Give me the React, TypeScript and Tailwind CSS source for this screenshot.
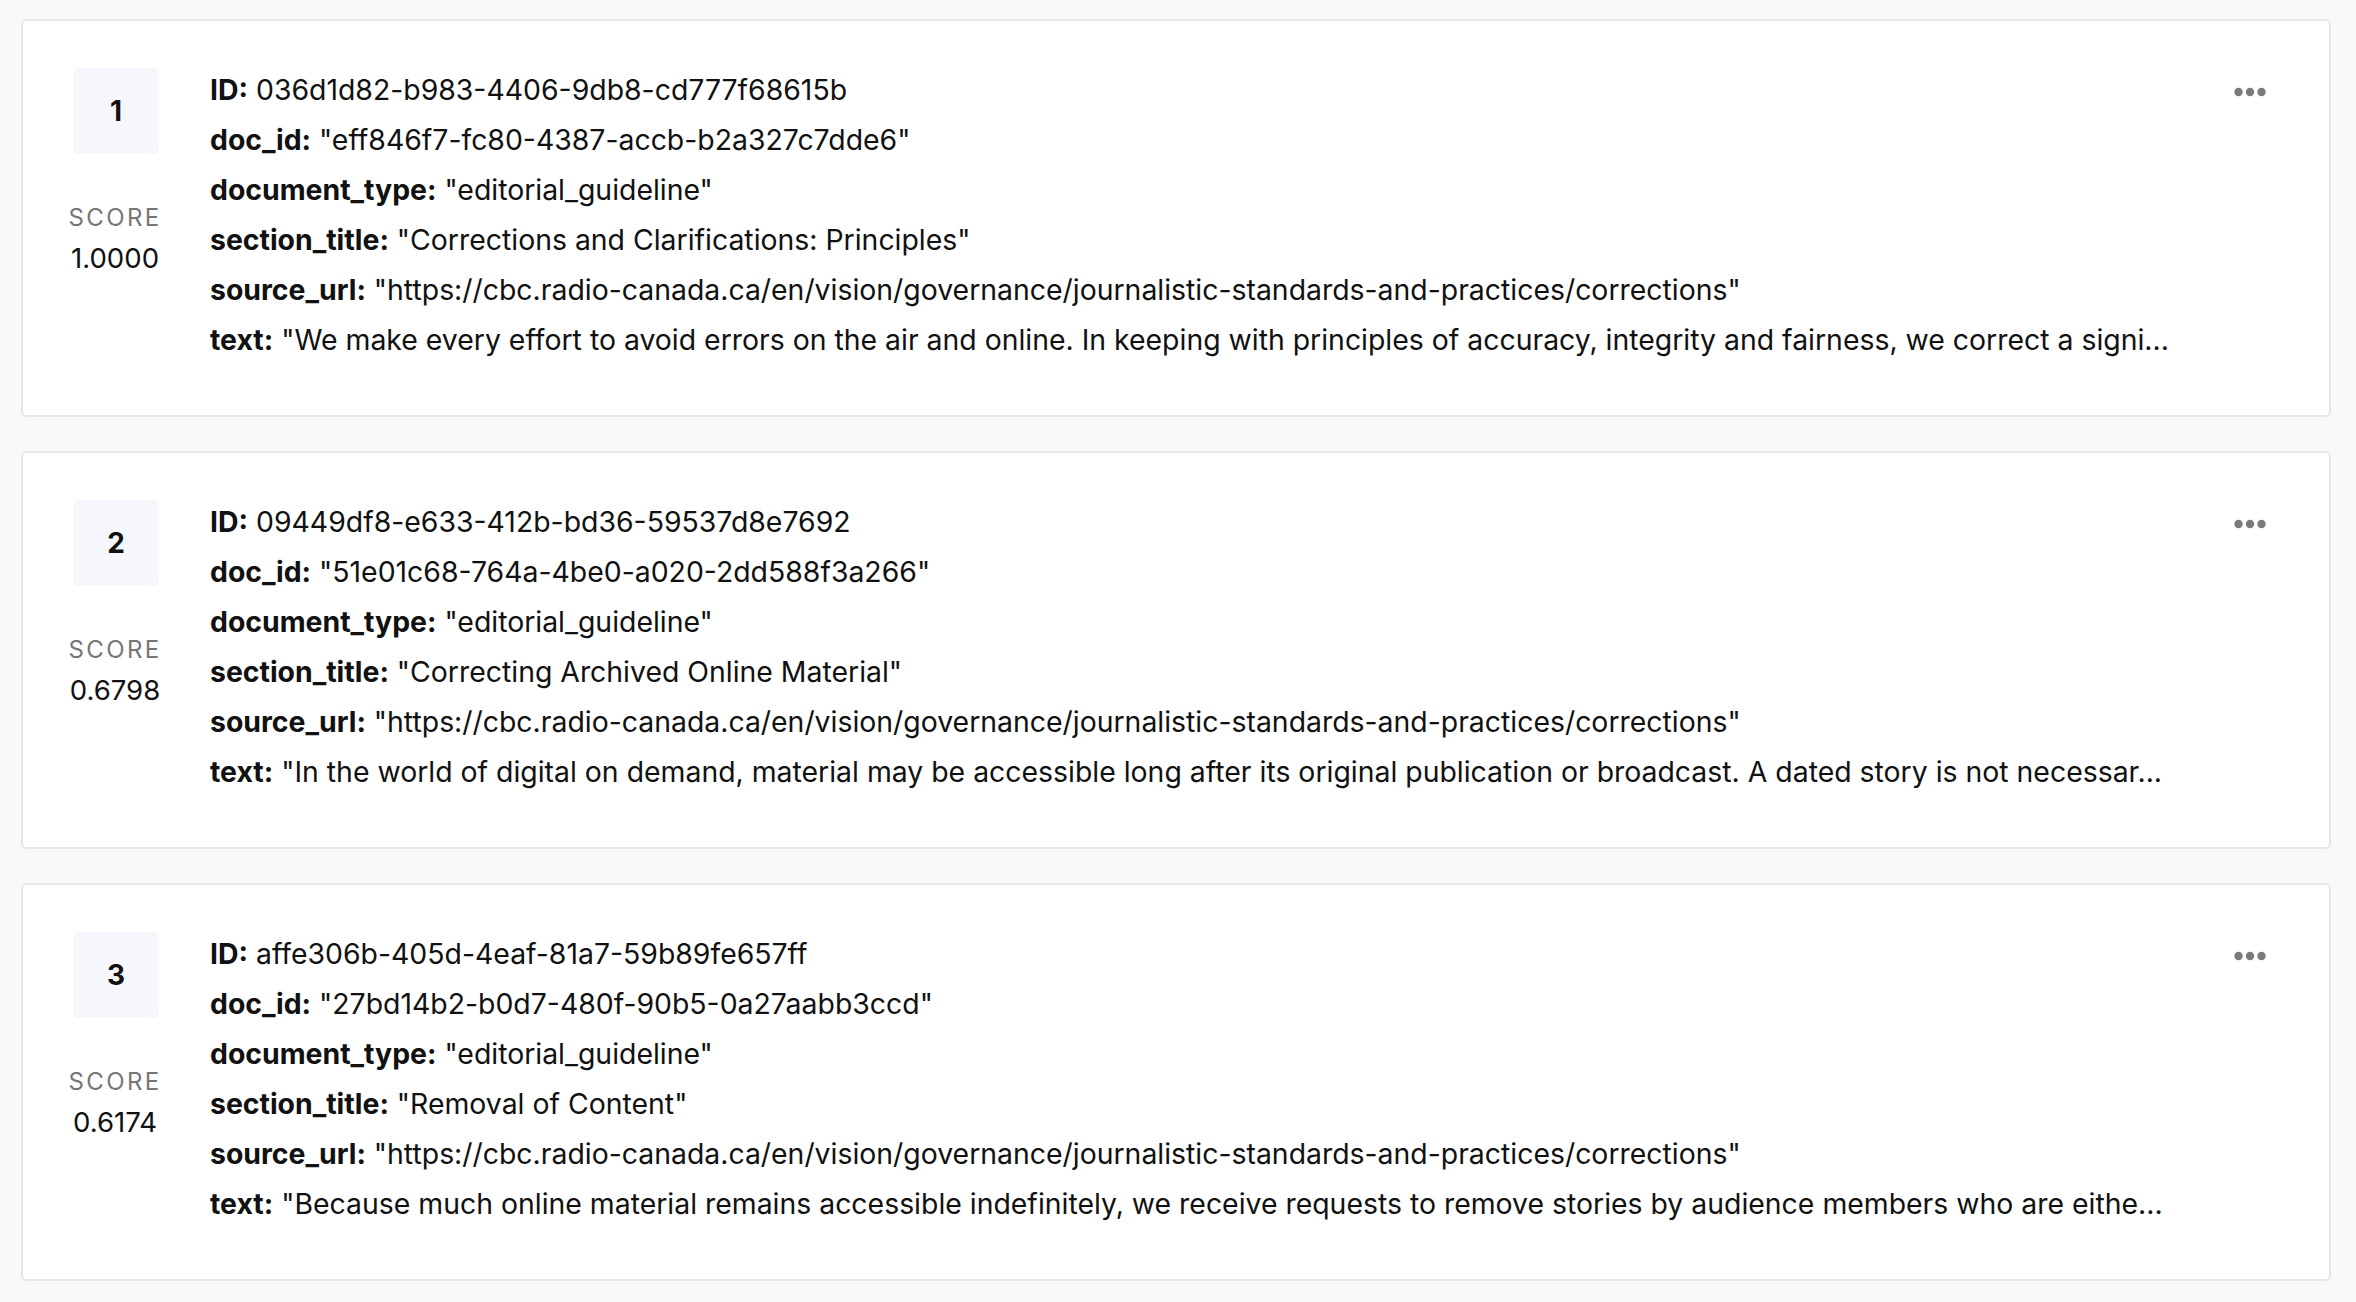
const results = [
  {
    rank: 1,
    score: "1.0000",
    id: "036d1d82-b983-4406-9db8-cd777f68615b",
    docId: "eff846f7-fc80-4387-accb-b2a327c7dde6",
    sectionTitle: "Corrections and Clarifications: Principles",
    text: "We make every effort to avoid errors on the air and online. In keeping with principles of accuracy, integrity and fairness, we correct a signi...",
  },
  {
    rank: 2,
    score: "0.6798",
    id: "09449df8-e633-412b-bd36-59537d8e7692",
    docId: "51e01c68-764a-4be0-a020-2dd588f3a266",
    sectionTitle: "Correcting Archived Online Material",
    text: "In the world of digital on demand, material may be accessible long after its original publication or broadcast. A dated story is not necessar...",
  },
  {
    rank: 3,
    score: "0.6174",
    id: "affe306b-405d-4eaf-81a7-59b89fe657ff",
    docId: "27bd14b2-b0d7-480f-90b5-0a27aabb3ccd",
    sectionTitle: "Removal of Content",
    text: "Because much online material remains accessible indefinitely, we receive requests to remove stories by audience members who are eithe...",
  },
];

const SOURCE_URL =
  "https://cbc.radio-canada.ca/en/vision/governance/journalistic-standards-and-practices/corrections";

function Field({ label, value }: { label: string; value: string }) {
  return (
    <div className="h-[50px] leading-[50px] whitespace-nowrap">
      <span className="font-[650]">{label}:</span> {value}
    </div>
  );
}

function MoreDots() {
  return (
    <svg width="32" height="10" viewBox="0 0 32 10" className="text-[#7a7a7a]">
      <circle cx="4.5" cy="5" r="4.2" fill="currentColor" />
      <circle cx="16" cy="5" r="4.2" fill="currentColor" />
      <circle cx="27.5" cy="5" r="4.2" fill="currentColor" />
    </svg>
  );
}

type Result = (typeof results)[number];

function ResultCard({ r }: { r: Result }) {
  return (
    <div className="flex h-[398px] rounded-[5px] border-2 border-[#e7e7e7] bg-white pt-[44px] pl-[48px] pr-[63px]">
      <div className="mt-[3px] flex w-[88px] shrink-0 flex-col items-center">
        <div className="ml-[2px] flex h-[86px] w-[86px] items-center justify-center rounded-[5px] bg-[#f6f7fd] text-[28px] font-[650] text-[#111]">
          {r.rank}
        </div>
        <div className="mt-[48px] h-[32px] text-[24px] leading-[32px] tracking-[0.1em] text-[#767676]">
          SCORE
        </div>
        <div className="mt-[6px] h-[36px] text-[27.6px] leading-[36px] text-[#111]">
          {r.score}
        </div>
      </div>
      <div className="ml-[51px] min-w-0 flex-1 text-[28.4px] text-[#111]">
        <Field label="ID" value={r.id} />
        <Field label="doc_id" value={`"${r.docId}"`} />
        <Field label="document_type" value={`"editorial_guideline"`} />
        <Field label="section_title" value={`"${r.sectionTitle}"`} />
        <Field label="source_url" value={`"${SOURCE_URL}"`} />
        <Field label="text" value={`"${r.text}`} />
      </div>
      <div className="mt-[22px] shrink-0">
        <MoreDots />
      </div>
    </div>
  );
}

export default function App() {
  return (
    <div
      className="flex min-h-screen flex-col gap-[34px] bg-[#f9f9f9] pt-[19px] pb-[20px] pl-[21px] pr-[25px]"
      style={{ fontFamily: "Inter, 'Noto Sans', sans-serif" }}
    >
      {results.map((r) => (
        <ResultCard key={r.rank} r={r} />
      ))}
    </div>
  );
}
